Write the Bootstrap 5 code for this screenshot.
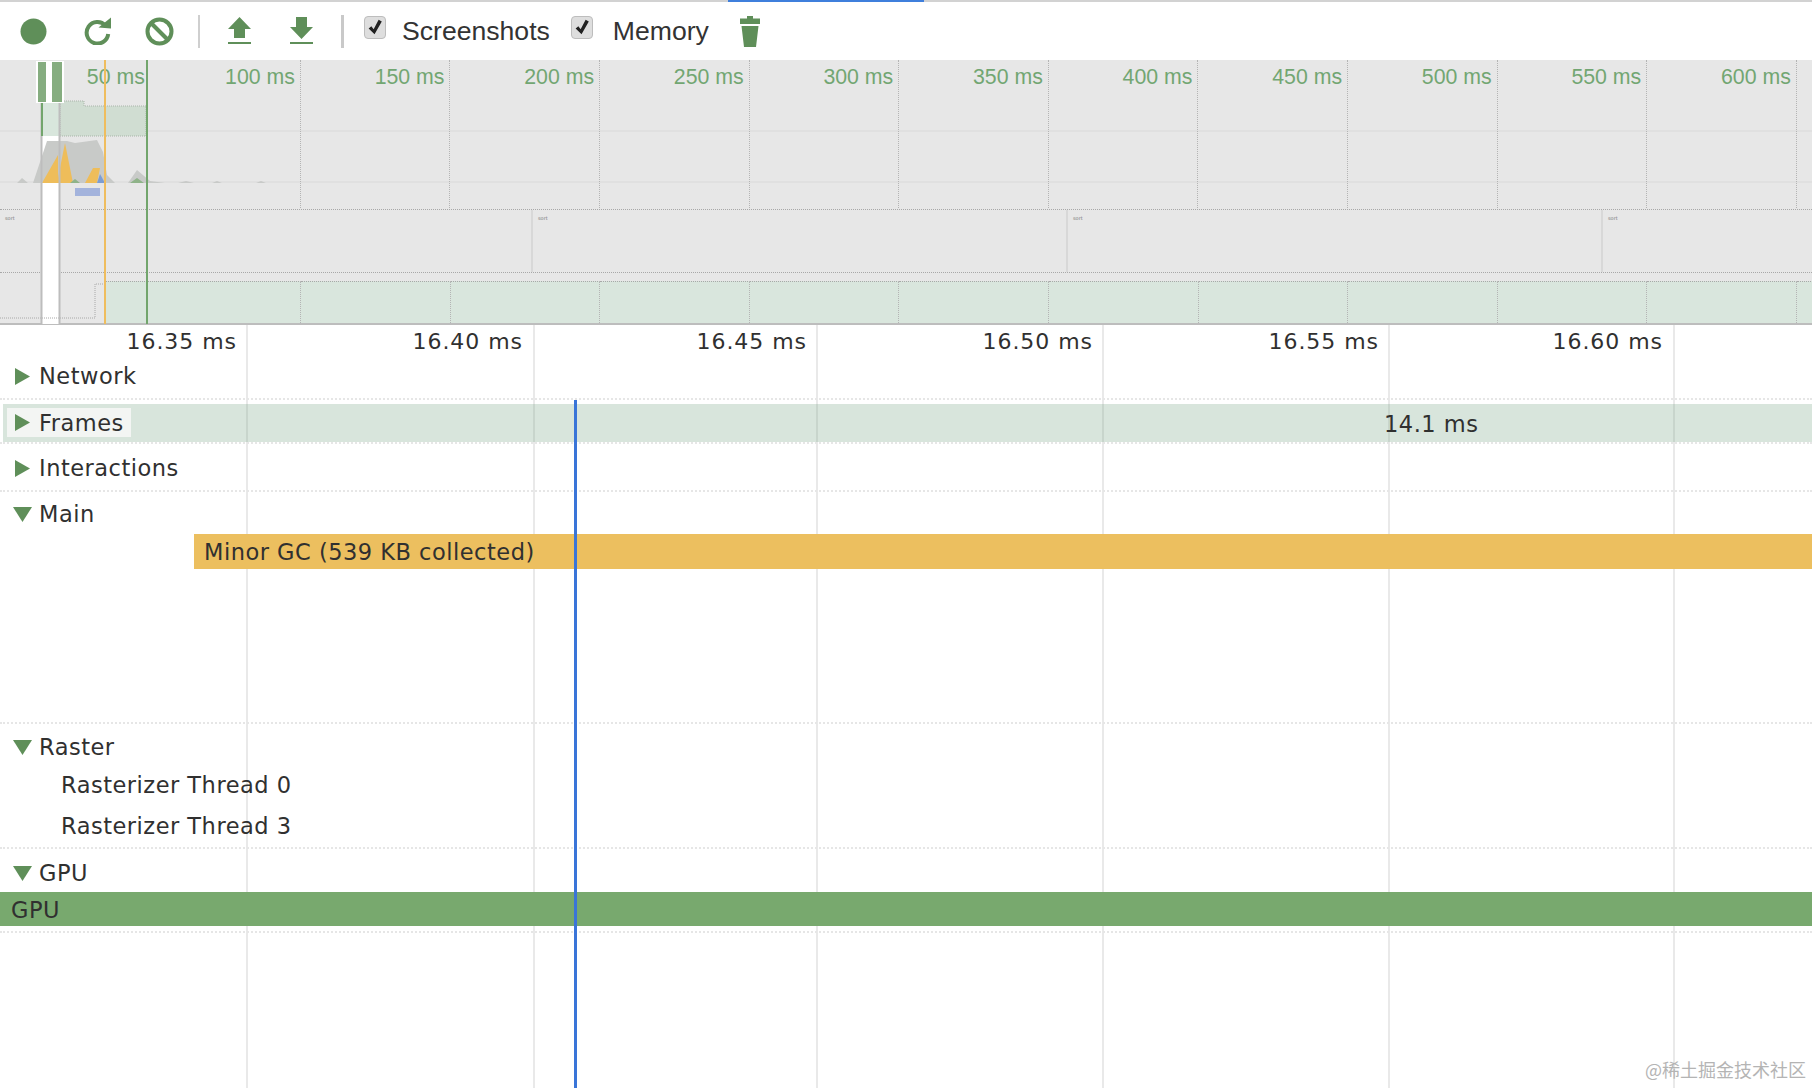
<!DOCTYPE html>
<html lang="en">
<head>
<meta charset="utf-8">
<title>Performance</title>
<link href="https://cdn.jsdelivr.net/npm/bootstrap@5.3.0/dist/css/bootstrap.min.css" rel="stylesheet">
<style>
html,body{height:100%;}
body{background:#fff;color:#303030;font-family:"DejaVu Sans",sans-serif;overflow:hidden;}
.pg{width:1812px;height:1088px;position:relative;overflow:hidden;}
.topline{height:2px;background:#d2d2d2;position:relative;}
.topline i{position:absolute;left:728px;width:196px;top:0;height:2px;background:#3f7fdc;}
.tbar{height:58px;font-family:"Liberation Sans",sans-serif;font-size:26.600px;color:#333;}
.tbar svg{display:block;fill:#5f8f59;flex:none;}
.i1{margin-left:20px;}.i2{margin-left:37px;}.i3{margin-left:33px;}
.sep1{width:2px;height:33px;background:#cfcfcf;margin-left:24px;}
.i4{margin-left:28px;}.i5{margin-left:39px;}
.sep2{width:3px;height:33px;background:#c9c9c9;margin-left:28px;}
.ck{appearance:none;width:22px;height:23px;border-radius:4px;border:1px solid #bdbdbd;background:#dedede;position:relative;flex:none;margin-top:-7px;}
.ck:checked{background:#dedede url("data:image/svg+xml,%3Csvg xmlns='http://www.w3.org/2000/svg' viewBox='0 0 22 23'%3E%3Cpath d='M4 12.500l3-2.500 2.500 3.500L15 3l3.500 1.800L10.500 19z' fill='%23222'/%3E%3C/svg%3E") center/100% 100% no-repeat;}
.ck1{margin-left:20px;}.lb1{margin-left:16px;margin-top:2px;}
.ck2{margin-left:21px;}.lb2{margin-left:20px;margin-top:2px;}
.i6{margin-left:31px;}
.ovw{height:265px;position:relative;background:#e7e7e7;border-bottom:2px solid #bdbdbd;}
.ovtop{height:149px;}
.bnd1{height:72px;border-bottom:2px solid #e0e0e0;}
.bnd2{height:51px;border-bottom:2px solid #e0e0e0;}
.ovcols{position:absolute;left:0;top:0;height:148px;font-family:"Liberation Sans",sans-serif;font-size:21.300px;color:#72a672;}
.ovcol{width:149.600px;flex:none;text-align:right;padding:3px 5px 0 0;line-height:28px;border-right:1px dotted #b4b4b4;}
.ovcol.c0{width:151.300px;padding-right:6.500px;border-right:0;}
.film{height:64px;border-top:1px dotted #a8a8a8;border-bottom:1px dotted #a8a8a8;}
.fcell{flex:none;border-right:2px solid #d8d8d8;font-size:5px;color:#777;padding:4px 0 0 5px;line-height:8px;}
.frow{height:42px;margin-top:8px;}
.fgap{width:105px;flex:none;}
.fg{flex:none;width:149.600px;background:#d9e6dd;border-top:1px dotted #a8a8a8;border-right:1px dotted #b4b4b4;}
.ovsvg{position:absolute;left:0;top:0;}
.ruler{height:37px;font-size:22px;line-height:33px;position:relative;z-index:1;letter-spacing:.95px;}
.rl{flex:none;text-align:right;}
.grid{position:absolute;left:0;top:325px;bottom:0;z-index:0;}
.gc{flex:none;border-right:2px solid #e9e9e9;}
.trk{position:relative;z-index:1;font-size:22.500px;color:#303030;letter-spacing:.5px;}
.rh{display:flex;align-items:center;}
.rh svg{fill:#5f8f59;margin-left:13px;width:19px;flex:none;}
.rh span{margin-left:7px;line-height:30px;}
.sect{border-bottom:2px dotted #e6e6e6;}
.s1{height:38px;padding-top:0;}
.s1 .rh{height:28px;}
.s2{height:44px;padding-top:4px;padding-left:3px;}
.fband{height:38px;background:rgba(125,168,138,.3);position:relative;display:flex;}
.fband .rh{background:#f3f5f3;height:29px;margin:4px 0 0 4px;padding-right:6px;width:124px;}
.fband .rh svg{margin-left:6px;}
.fval{position:absolute;left:1381px;top:3px;line-height:34px;}
.s3{height:48px;padding-top:9px;}
.s3 .rh{height:30px;}
.s4{height:232px;padding-top:7px;}
.s4 .rh{height:30px;}
.gcbar{height:35px;margin:5px 0 0 194px;background:#ecbf5f;line-height:36px;padding-left:10px;}
.s5{height:125px;padding-top:8px;}
.s5 .rh{height:30px;}
.thr{margin-left:61px;line-height:30px;height:42px;}
.thr.t0{height:49px;padding-top:8px;}
.s6{height:84px;padding-top:9px;}
.s6 .rh{height:30px;}
.gpub{height:34px;margin-top:4px;background:#78a96e;line-height:36px;padding-left:11px;}
.curs{position:absolute;left:574px;top:400px;bottom:0;width:3px;background:#3a75d8;z-index:2;}
.wm{position:absolute;right:6px;bottom:7px;font:18px/24px "Noto Sans CJK SC",sans-serif;color:#b4b4b4;z-index:3;}
</style>
</head>
<body>
<div class="pg">
  <div class="topline"><i></i></div>
  <div class="tbar d-flex align-items-center">
    <svg class="i1" width="27" height="27" viewBox="0 0 27 27"><circle cx="13.500" cy="13.500" r="13"/></svg>
    <svg class="i2" width="28" height="28" viewBox="0 0 28 28"><path d="M21.500 8.500A10.800 10.800 0 1 0 24.200 17" fill="none" stroke="#5f8f59" stroke-width="4"/><path d="M14.500 10.500 27 11.500V.5z"/></svg>
    <svg class="i3" width="29" height="29" viewBox="0 0 29 29"><circle cx="14.500" cy="14.500" r="12" fill="none" stroke="#5f8f59" stroke-width="4"/><path d="M6 6 23 23" stroke="#5f8f59" stroke-width="4"/></svg>
    <div class="sep1"></div>
    <svg class="i4" width="23" height="28" viewBox="0 0 23 28"><path d="M11.500 0 23 12h-6v9H6v-9H0zM0 25h23v2H0z"/></svg>
    <svg class="i5" width="23" height="28" viewBox="0 0 23 28"><path d="M6 0h11v10h6L11.500 22 0 10h6zM0 25h23v2H0z"/></svg>
    <div class="sep2"></div>
    <input class="ck ck1" type="checkbox" checked aria-label="Screenshots">
    <span class="lb1">Screenshots</span>
    <input class="ck ck2" type="checkbox" checked aria-label="Memory">
    <span class="lb2">Memory</span>
    <svg class="i6" width="20" height="31" viewBox="0 0 20 31"><path d="M7 0h6v2.500h7V8H0V2.500h7zM1.500 10h17L16 31H4z"/></svg>
  </div>

  <div class="ovw">
    <div class="ovtop">
      <div class="bnd1"></div>
      <div class="bnd2"></div>
    </div>
    <div class="film d-flex">
      <div class="fcell" style="width:533px">sort</div>
      <div class="fcell" style="width:535px">sort</div>
      <div class="fcell" style="width:535px">sort</div>
      <div class="fcell border-0">sort</div>
    </div>
    <div class="frow d-flex">
      <div class="fgap"></div>
      <div class="fg" style="width:196px"></div>
      <div class="fg"></div><div class="fg"></div><div class="fg"></div><div class="fg"></div><div class="fg"></div><div class="fg"></div><div class="fg"></div><div class="fg"></div><div class="fg"></div><div class="fg"></div>
      <div class="fg flex-grow-1"></div>
    </div>
    <div class="ovcols d-flex">
      <div class="ovcol c0">50 ms</div>
      <div class="ovcol">100 ms</div><div class="ovcol">150 ms</div><div class="ovcol">200 ms</div><div class="ovcol">250 ms</div><div class="ovcol">300 ms</div><div class="ovcol">350 ms</div><div class="ovcol">400 ms</div><div class="ovcol">450 ms</div><div class="ovcol">500 ms</div><div class="ovcol">550 ms</div><div class="ovcol">600 ms</div>
    </div>
    <svg class="ovsvg" width="1812" height="264" viewBox="0 60 1812 264">
      <rect x="42" y="136" width="17" height="188" fill="#fff"/>
      <rect x="42" y="103" width="17" height="33" fill="#d8e6dc"/>
      <path d="M60 101H84V106H146V136H60z" fill="#d0ddd2" stroke="#a9b4a9" stroke-dasharray="1 1"/>
      <path d="M17 183L22 178L28 183zM33 183L47 141H67L75 143L97 140L103 152L107 175L115 183zM128 183L137 170L150 181L165 183zM178 183L186 181L194 183zM212 183L217 181L222 183zM256 183L261 181L266 183z" fill="#c8cac8"/>
      <path d="M42 183L58 155V183zM57 183L65 143L73 183zM85 183L93 168H100L97 183z" fill="#eebd5a"/>
      <path d="M70 183L75 179L80 183zM130 183L137 178L144 183z" fill="#8fb389"/>
      <path d="M97 183L100 174L105 183z" fill="#7d9dd2"/>
      <rect x="75" y="188" width="25" height="8" fill="#a3b3dc"/>
      <path d="M0 318H95V284H105" fill="none" stroke="#a8a8a8" stroke-dasharray="1 1"/>
      <rect x="40.500" y="101" width="2" height="223" fill="#bdbdbd"/>
      <rect x="58.500" y="103" width="2" height="221" fill="#bdbdbd"/>
      <rect x="41" y="103" width="2" height="33" fill="#72a56c"/>
      <rect x="36" y="61" width="28" height="42" fill="#fff"/>
      <rect x="38" y="62" width="8" height="40" fill="#86ad80"/>
      <rect x="52" y="62" width="10" height="40" fill="#86ad80"/>
      <rect x="104" y="60" width="2" height="264" fill="#efbd5e"/>
      <rect x="146" y="60" width="2" height="264" fill="#72a56c"/>
    </svg>
  </div>

  <div class="grid d-flex">
    <div class="gc" style="width:248px"></div><div class="gc" style="width:287px"></div><div class="gc" style="width:283px"></div><div class="gc" style="width:286px"></div><div class="gc" style="width:286px"></div><div class="gc" style="width:285px"></div>
  </div>

  <div class="ruler d-flex">
    <div class="rl" style="width:237px">16.35 ms</div>
    <div class="rl" style="width:286px">16.40 ms</div>
    <div class="rl" style="width:284px">16.45 ms</div>
    <div class="rl" style="width:286px">16.50 ms</div>
    <div class="rl" style="width:286px">16.55 ms</div>
    <div class="rl" style="width:284px">16.60 ms</div>
  </div>

  <div class="trk">
    <div class="sect s1"><div class="rh"><svg height="17" viewBox="0 0 19 17"><path d="M2 0 17 8.500 2 17z"/></svg><span>Network</span></div></div>
    <div class="sect s2">
      <div class="fband">
        <div class="rh"><svg height="17" viewBox="0 0 19 17"><path d="M2 0 17 8.500 2 17z"/></svg><span>Frames</span></div>
        <div class="fval">14.1 ms</div>
      </div>
    </div>
    <div class="sect s3"><div class="rh"><svg height="17" viewBox="0 0 19 17"><path d="M2 0 17 8.500 2 17z"/></svg><span>Interactions</span></div></div>
    <div class="sect s4">
      <div class="rh"><svg height="15" viewBox="0 0 19 15"><path d="M0 0H19L9.500 15z"/></svg><span>Main</span></div>
      <div class="gcbar">Minor GC (539 KB collected)</div>
    </div>
    <div class="sect s5">
      <div class="rh"><svg height="15" viewBox="0 0 19 15"><path d="M0 0H19L9.500 15z"/></svg><span>Raster</span></div>
      <div class="thr t0">Rasterizer Thread 0</div>
      <div class="thr">Rasterizer Thread 3</div>
    </div>
    <div class="sect s6">
      <div class="rh"><svg height="15" viewBox="0 0 19 15"><path d="M0 0H19L9.500 15z"/></svg><span>GPU</span></div>
      <div class="gpub">GPU</div>
    </div>
  </div>

  <div class="curs"></div>
  <div class="wm">@稀土掘金技术社区</div>
</div>
<script src="https://cdn.jsdelivr.net/npm/bootstrap@5.3.0/dist/js/bootstrap.bundle.min.js"></script>
</body>
</html>
